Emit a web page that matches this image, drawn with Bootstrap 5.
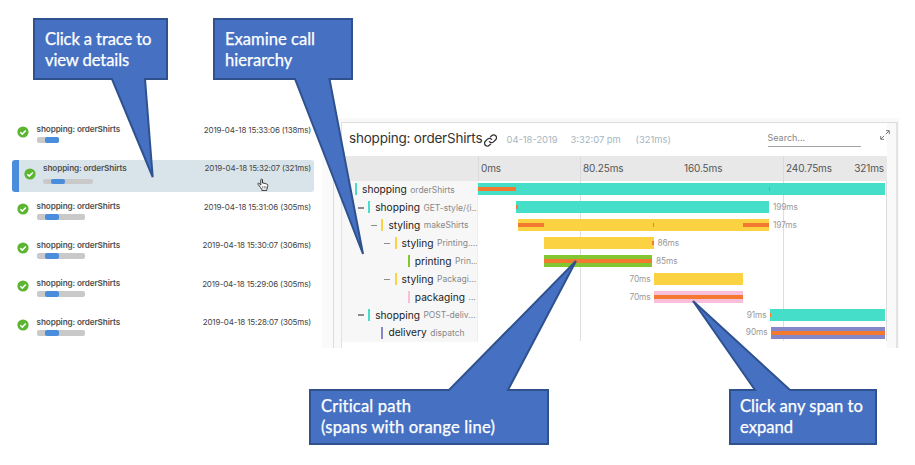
<!DOCTYPE html>
<html lang="en">
<head>
<meta charset="utf-8">
<title>shopping: orderShirts</title>
<link href="https://cdn.jsdelivr.net/npm/bootstrap@5.3.0/dist/css/bootstrap.min.css" rel="stylesheet">
<style>
body{width:915px;height:465px;overflow:hidden;background:#fff;font-family:Inter,"Liberation Sans",sans-serif;color:#444;line-height:1}
.stage{width:915px;height:465px;padding-top:118px}
.traces{width:322px;height:230px;padding-left:12px}
.trace{width:302px;height:32px;margin-bottom:6.5px;padding:3.3px 3px 0 5px;line-height:10px}
.trace.first{margin-top:3px}
.trace.picked{background:#d9e4ea;border-left:7px solid #4a8ddc;border-radius:3px;padding-left:4.5px;padding-top:3.5px}
.tick{width:12px;height:12px;margin:2px 7.5px 0 0}
.picked .tick{margin-top:4.5px}
.tname{font-size:8.2px;font-weight:600;letter-spacing:-.12px;color:#505050;white-space:nowrap}
.ttime{font-size:8px;letter-spacing:-.15px;color:#444;white-space:nowrap;padding-top:.3px}
.meter{height:6px;width:48.5px;background:#c9c9c9;border-radius:2px;margin-top:3px;padding-left:8px}
.meter i{display:block;width:14px;height:6px;background:#4a8ddc;border-radius:2px}
.picked .meter{width:50px;height:5.5px;margin-top:5.5px}
.picked .meter i{height:5.5px}
.meter.short{width:22.5px}
.rail{width:12px;height:230px;background:#fafafa;border-right:1px solid #ddd}
.pane{width:565px;height:230px;background:#f9f9f9;padding:4px 2px 0 7px}
.sheet{width:557px;height:226px;border-top:1px solid #dcdcdc;border-left:1px solid #e2e2e2;border-right:2px solid #e3e3e3;padding-right:9px}
.inner{background:#fff;height:225px}
.top-bar{height:33px;padding-left:7px;white-space:nowrap}
.title{font-size:13.5px;color:#333;width:135px;letter-spacing:-.21px;margin-top:-2px}
.link-icon{margin-top:1px}
.stamp{font-size:9.4px;color:#a6b5bf}
.find{width:93px;border-bottom:1px solid #a4a4a4;font-size:9px;color:#888;height:16px;line-height:14px;margin-top:-2px}
.axis{height:24.5px;background:#e8e8e8;font-size:10px;letter-spacing:-.12px;color:#555;width:545px}
.axis div{border-left:1px solid #dadada;padding-left:2px;height:24.5px;line-height:25px}
.spans{height:160.5px;background:linear-gradient(#ddd,#ddd) 238px 0/1px 100% no-repeat,linear-gradient(#ddd,#ddd) 441px 0/1px 100% no-repeat,linear-gradient(#ddd,#ddd) 544px 0/1px 100% no-repeat}
.span-row{height:17.9px}
.tree{width:136px;background:#f7f7f7;height:17.9px;white-space:nowrap;overflow:hidden;border-right:1px solid #eee}
.minus{width:6px;height:1.5px;background:#8c8c8c;margin:1px 4.5px 0 0}
.stripe{width:2px;height:12px;margin-right:5px}
.svc{font-size:10.2px;color:#222}
.op{font-size:8.5px;color:#888;margin-left:3.5px;padding-top:1px}
.lane{width:408px;height:17.9px}
.bar-box{height:12px}
.crit{height:4px;background:#f2792f}
.dur{font-size:8.3px;letter-spacing:-.1px;color:#999}
.c-teal{background:#45dec8}.c-yellow{background:#fbd242}.c-green{background:#82c732}.c-pink{background:#f9bfda}.c-purple{background:#8587c8}
.note{color:#fff;font:16.6px/21px Lato,sans-serif;white-space:nowrap;-webkit-text-stroke:.25px #fff}
.note-a{letter-spacing:-.12px}
.note-c{letter-spacing:.17px}
</style>
</head>
<body class="position-relative">
<div class="stage d-flex">
 <div class="traces" id="traces"></div>
 <div class="rail"></div>
 <div class="pane"><div class="sheet position-relative">
  <div class="inner">
   <div class="top-bar d-flex align-items-center">
    <span class="title">shopping: orderShirts</span>
    <svg class="link-icon" width="13" height="13" viewBox="0 0 24 24" fill="none" stroke="#333" stroke-width="2.4" stroke-linecap="round"><path d="M10 14a5 5 0 0 0 7.5.5l4-4a5.2 5.2 0 0 0-7.4-7.4l-2.2 2.2M14 10a5 5 0 0 0-7.5-.5l-4 4a5.2 5.2 0 0 0 7.400 7.400l2.200-2.200"/></svg>
    <span class="stamp" style="margin-left:9.5px;width:64px">04-18-2019</span>
    <span class="stamp" style="width:65px">3:32:07 pm</span>
    <span class="stamp" style="width:132px">(321ms)</span>
    <div class="find">Search...</div>
   </div>
   <div class="axis d-flex"><span style="width:136px"></span><div style="width:102px">0ms</div><div style="width:103px">80.25ms</div><span style="width:100px;line-height:25px;padding-left:1px">160.5ms</span><div class="d-flex justify-content-between" style="width:104px;padding-right:3px"><span>240.75ms</span><span>321ms</span></div></div>
   <div class="spans" id="spans"></div>
  </div>
  <svg class="position-absolute" style="left:537px;top:6px" width="12" height="12" viewBox="0 0 12 12" fill="none" stroke="#777" stroke-width="1"><path d="M6.800 5.200L10 2M7 1.700h3.300V5M5.200 6.800L2 10M1.700 7v3.300H5"/></svg>
 </div></div>
</div>
<svg class="position-absolute top-0 start-0" width="915" height="465" viewBox="0 0 915 465">
 <g fill="#4671c3" stroke="#2f528f" stroke-width="2">
 <path d="M34 19H167V79H145L152.700 177L112 79H34Z"/>
 <path d="M214 19H352V79H329.500L363 254L295 79H214Z"/>
 <path d="M310 390H449L576 261L508 390H548V444H310Z"/>
 <path d="M730 390H755L693 301L790 390H876V444H730Z"/>
 </g>
 <path d="M260.500 187.500l-2.500-3.200c-.6-1 .6-1.500 1.200-.8l1.600 1.500V180c0-1.200 1.700-1.200 1.700 0v3l1.500.2 1.500.4 1.400.5c1 .4 1 1.200.7 2.300l-.8 3v1h-5v-1z" fill="#fff" stroke="#333" stroke-width="1"/>
 <path d="M262.700 186v2.500M264.300 186v2.500M265.900 186v2.500" stroke="#444" stroke-width=".6"/>
</svg>
<div class="note note-a position-absolute" style="left:45px;top:29px">Click a trace to<br>view details</div>
<div class="note position-absolute" style="left:225px;top:29px">Examine call<br>hierarchy</div>
<div class="note note-c position-absolute" style="left:321px;top:396px">Critical path<br>(spans with orange line)</div>
<div class="note position-absolute" style="left:740px;top:396px">Click any span to<br>expand</div>
<script>
const traces=[['33:06','138'],['32:07','321'],['31:06','305'],['30:07','306'],['29:06','305'],['28:07','305']];
document.getElementById('traces').innerHTML=traces.map(([t,d],i)=>`<div class="trace d-flex ${i==0?'first':''} ${i==1?'picked':''}">
<svg class="tick" viewBox="0 0 12 12"><circle cx="6" cy="6" r="5.600" fill="#5cb531"/><path d="M3.300 6.200l2 1.900 3.500-3.700" fill="none" stroke="#fff" stroke-width="1.500"/></svg>
<div class="flex-grow-1"><div class="tname">shopping: orderShirts</div><div class="meter ${i==0?'short':''}"><i></i></div></div>
<div class="ttime">2019-04-18 15:${t} (${d}ms)</div></div>`).join('');
// service, operation, depth, collapsible, colour, start, end, duration, label side, critical segments
const rows=[
['shopping','orderShirts',0,0,'teal',0,407,'','',[[0,38],[291,1]]],
['shopping','GET-style/{i...',1,1,'teal',38,291,'199ms','r',[[0,2]]],
['styling','makeShirts',2,1,'yellow',40,291,'197ms','r',[[0,26],[135,1],[225,26]]],
['styling','Printing....',3,1,'yellow',66,175.500,'86ms','r',[[108,1.500]]],
['printing','Prin...',4,0,'green',66,174,'85ms','r',[[0,108]]],
['styling','Packagi...',3,1,'yellow',176,265,'70ms','l',[]],
['packaging','...',4,0,'pink',176,265,'70ms','l',[[0,89]]],
['shopping','POST-deliv...',1,1,'teal',292,407,'91ms','l',[[0,1]]],
['delivery','dispatch',2,0,'purple',293,407,'90ms','l',[[0,114]]]];
document.getElementById('spans').innerHTML=rows.map(r=>{
 let x=0;
 const segs=r[9].map(s=>{const m=s[0]-x;x=s[0]+s[1];return `<div class="crit" style="margin-left:${m}px;width:${s[1]}px"></div>`}).join('');
 const bar=`<div class="bar-box d-flex align-items-center flex-shrink-0 c-${r[4]}" style="width:${r[6]-r[5]}px">${segs}</div>`;
 const lane=r[8]=='l'?`<div class="dur text-end" style="width:${r[5]-3.500}px;margin-right:3.5px">${r[7]}</div>${bar}`:`<div style="width:${r[5]}px"></div>${bar}<div class="dur" style="margin-left:4px">${r[7]}</div>`;
 return `<div class="span-row d-flex"><div class="tree d-flex align-items-center" style="padding-left:${2.5+r[2]*13.2}px"><span class="minus flex-shrink-0 ${r[3]?'':'invisible'}"></span><span class="stripe flex-shrink-0 c-${r[4]}"></span><span class="svc">${r[0]}</span><span class="op">${r[1]}</span></div><div class="lane d-flex align-items-center">${lane}</div></div>`}).join('');
</script>
<script src="https://cdn.jsdelivr.net/npm/bootstrap@5.3.0/dist/js/bootstrap.bundle.min.js"></script>
</body>
</html>
